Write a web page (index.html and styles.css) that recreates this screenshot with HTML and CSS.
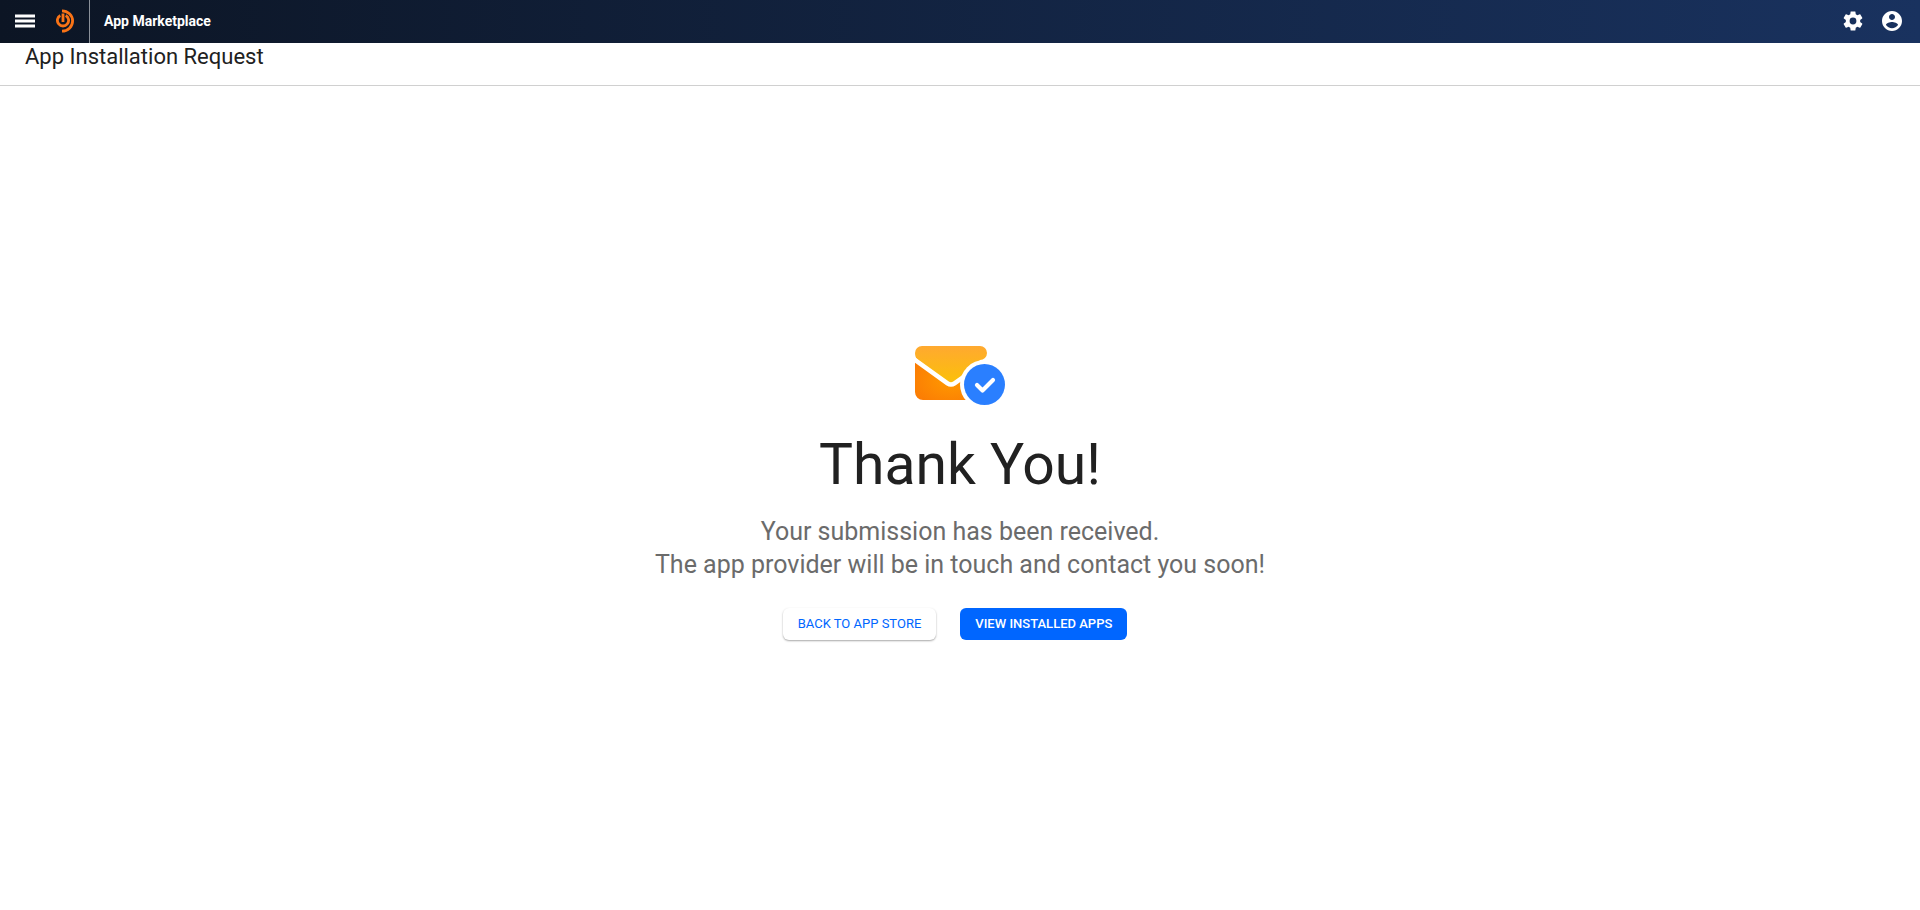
FILE: index.html
```html
<!DOCTYPE html>
<html lang="en">
<head>
<meta charset="utf-8">
<title>App Marketplace</title>
<link rel="stylesheet" href="styles.css">
</head>
<body>
<header class="topbar">
  <button class="icon-button menu-button" type="button" aria-label="Menu">
    <svg width="20" height="14" viewBox="0 0 20 14" fill="#fff"><path d="M0 0.500h20v3H0zM0 5.500h20v3H0zM0 10.500h20v3H0z"/></svg>
  </button>
  <a class="logo" href="#" aria-label="Home">
    <svg width="20" height="24" viewBox="0 0 20 24" fill="none" stroke="#f97316" stroke-width="2.8">
      <path d="M6 1.900A10.600 10.100 0 0 1 6 22.100"/>
      <path d="M4.300 6.500A5.600 5.600 0 1 0 9.700 6.500"/>
      <path d="M7 4.500v8.500"/>
    </svg>
  </a>
  <span class="product">App Marketplace</span>
  <nav class="tools" aria-label="Account">
    <button class="icon-button" type="button" aria-label="Settings">
      <svg width="24" height="24" viewBox="0 0 24 24" fill="#fff"><path d="M19.14 12.94c.04-.3.06-.61.06-.94 0-.32-.02-.64-.07-.94l2.03-1.58c.18-.14.23-.41.12-.61l-1.92-3.32c-.12-.22-.37-.29-.59-.22l-2.39.96c-.5-.38-1.03-.7-1.62-.94l-.36-2.54c-.04-.24-.24-.41-.48-.41h-3.84c-.24 0-.43.17-.47.41l-.36 2.54c-.59.24-1.13.57-1.62.94l-2.39-.96c-.22-.08-.47 0-.59.22L2.74 8.87c-.12.21-.08.47.12.61l2.03 1.58c-.05.3-.09.63-.09.94s.02.64.07.94l-2.03 1.58c-.18.14-.23.41-.12.61l1.920 3.320c.12.22.37.29.59.22l2.390-.96c.5.38 1.030.7 1.620.94l.36 2.540c.05.24.24.41.48.41h3.840c.24 0 .44-.17.47-.41l.36-2.540c.59-.24 1.130-.56 1.620-.94l2.390.96c.22.08.47 0 .59-.22l1.920-3.320c.12-.22.07-.47-.12-.61l-2.010-1.580zM12 15.400A3.400 3.400 0 1 1 12 8.600a3.400 3.400 0 0 1 0 6.800z"/></svg>
    </button>
    <button class="icon-button" type="button" aria-label="Profile">
      <svg width="24" height="24" viewBox="0 0 24 24" fill="#fff"><path d="M12 2C6.480 2 2 6.480 2 12s4.480 10 10 10 10-4.480 10-10S17.520 2 12 2zm0 3c1.660 0 3 1.340 3 3s-1.340 3-3 3-3-1.340-3-3 1.340-3 3-3zm0 14.200c-2.500 0-4.710-1.280-6-3.220.03-1.990 4-3.080 6-3.080 1.990 0 5.970 1.090 6 3.080-1.290 1.940-3.500 3.220-6 3.220z"/></svg>
    </button>
  </nav>
</header>
<div class="titlebar"><h1 class="page-title">App Installation Request</h1></div>
<main class="content">
  <svg class="illustration" width="90" height="60" viewBox="0 0 90 60">
    <defs>
      <linearGradient id="flap" x1="0" y1="0" x2="0" y2="1"><stop offset="0" stop-color="#ffa930"/><stop offset="1" stop-color="#fbc108"/></linearGradient>
      <radialGradient id="envelope" cx="0.6" cy="0.5" r="0.7"><stop offset="0" stop-color="#ff9a00"/><stop offset="1" stop-color="#fb7c04"/></radialGradient>
    </defs>
    <path d="M0 14L36 38 60 26V54H8a8 8 0 0 1-8-8z" fill="url(#envelope)"/>
    <path d="M7 0h58a7 7 0 0 1 0 14L58 24 39 37q-3 2-6 0L3 14Q0 12 0 7a7 7 0 0 1 7-7z" fill="url(#flap)"/>
    <path d="M-2 12.500L32.500 37.300q3.500 2.500 7 0L54 27" fill="none" stroke="#fff" stroke-width="4.500"/>
    <circle cx="69.500" cy="38.500" r="24.500" fill="#fff"/>
    <circle cx="69.500" cy="38.500" r="20.500" fill="#2a7fff"/>
    <path d="M62 39l5.500 5.500 10.500-10.500" fill="none" stroke="#fff" stroke-width="4.200" stroke-linecap="round" stroke-linejoin="round"/>
  </svg>
  <h2 class="headline">Thank You!</h2>
  <p class="message">Your submission has been received.<br>The app provider will be in touch and contact you soon!</p>
  <div class="actions">
    <button class="button button-secondary" type="button">BACK TO APP STORE</button>
    <button class="button button-primary" type="button">VIEW INSTALLED APPS</button>
  </div>
</main>
</body>
</html>
```

FILE: styles.css
```css
* { box-sizing: border-box; }

body {
  margin: 0;
  min-height: 100vh;
  display: flex;
  flex-direction: column;
  background: #fff;
  color: #212121;
  font-family: Roboto, "Liberation Sans", sans-serif;
}

.topbar {
  display: flex;
  align-items: center;
  height: 43px;
  padding: 0 16px 1px 15px;
  background: linear-gradient(90deg, #0c1524, #19325f);
  color: #fff;
}

.icon-button {
  display: flex;
  padding: 0;
  border: 0;
  background: none;
  cursor: pointer;
}

.logo {
  display: flex;
  align-items: center;
  height: 43px;
  padding: 0 13px 0 21px;
  border-right: 1px solid #8a9099;
}

.product {
  padding-left: 14px;
  font-size: 14px;
  font-weight: 700;
}

.tools {
  display: flex;
  gap: 15px;
  margin-left: auto;
}

.titlebar {
  height: 43px;
  padding: 0 25px;
  border-bottom: 1px solid #d0d0d0;
}

.page-title {
  margin: 0;
  font-size: 22px;
  font-weight: 400;
  line-height: 27px;
}

.content {
  flex: 1;
  display: flex;
  flex-direction: column;
  align-items: center;
  justify-content: center;
  padding-bottom: 10px;
}

.headline {
  margin: 25px 0 16px;
  font-size: 57px;
  font-weight: 400;
  line-height: 68px;
}

.message {
  margin: 0;
  color: #6b6b6b;
  font-size: 25px;
  line-height: 33px;
  text-align: center;
}

.actions {
  display: flex;
  gap: 24px;
  margin: 27px 10px 0 0;
}

.button {
  height: 32px;
  padding: 0 15px;
  border: 0;
  border-radius: 6px;
  font: 400 13px/32px Roboto, "Liberation Sans", sans-serif;
  cursor: pointer;
}

.button-secondary {
  background: #fff;
  color: #06f;
  box-shadow: 0 1px 2px rgba(0, 0, 0, 0.35);
}

.button-primary {
  background: #06f;
  color: #fff;
  font-weight: 500;
}
```
